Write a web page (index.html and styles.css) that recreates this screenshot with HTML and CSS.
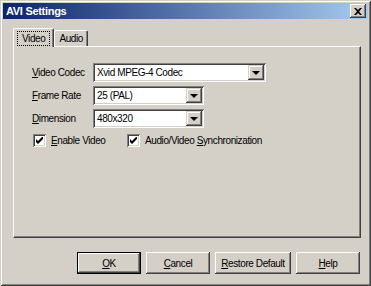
FILE: index.html
```html
<!DOCTYPE html>
<html lang="en">
<head>
  <meta charset="UTF-8">
  <title>AVI Settings</title>
  <link rel="stylesheet" href="styles.css">
</head>
<body>
  <div class="window">
    <div class="titlebar">
      <span class="title">AVI Settings</span>
      <span class="close">
        <svg width="8" height="7" viewBox="0 0 8 7"><path d="M0 0h2l2 2 2-2h2L5 3.5 8 7H6L4 5 2 7H0l3-3.5z" fill="#000"/></svg>
      </span>
    </div>

    <div class="content">
      <div class="tabs">
        <div class="tab active"><span class="focus">Video</span></div>
        <div class="tab">Audio</div>
      </div>

      <div class="panel">
        <div class="row">
          <label class="label"><u>V</u>ideo Codec</label>
          <div class="select wide">
            <span class="value">Xvid MPEG-4 Codec</span>
            <span class="drop"><i class="arrow"></i></span>
          </div>
        </div>
        <div class="row">
          <label class="label"><u>F</u>rame Rate</label>
          <div class="select">
            <span class="value">25 (PAL)</span>
            <span class="drop"><i class="arrow"></i></span>
          </div>
        </div>
        <div class="row">
          <label class="label"><u>D</u>imension</label>
          <div class="select">
            <span class="value">480x320</span>
            <span class="drop"><i class="arrow"></i></span>
          </div>
        </div>
        <div class="checks">
          <div class="check first">
            <span class="box">
              <svg width="7" height="7" viewBox="0 0 7 7"><path d="M0 2v3l2 2 5-5V-1L2 4z" fill="#000"/></svg>
            </span>
            <span><u>E</u>nable Video</span>
          </div>
          <div class="check">
            <span class="box">
              <svg width="7" height="7" viewBox="0 0 7 7"><path d="M0 2v3l2 2 5-5V-1L2 4z" fill="#000"/></svg>
            </span>
            <span>Audio/Video <u>S</u>ynchronization</span>
          </div>
        </div>
      </div>

      <div class="buttons">
        <button class="btn default"><u>O</u>K</button>
        <button class="btn"><u>C</u>ancel</button>
        <button class="btn restore"><u>R</u>estore Default</button>
        <button class="btn"><u>H</u>elp</button>
      </div>
    </div>
  </div>
</body>
</html>
```

FILE: styles.css
```css
body {
  margin: 0;
  padding: 0;
  background: #d4d0c8;
  font-family: "Liberation Sans", Arial, sans-serif;
  font-size: 10px;
  letter-spacing: -0.4px;
  color: #000;
  white-space: nowrap;
}

.window {
  width: 371px;
  height: 286px;
  box-sizing: border-box;
  background: #d4d0c8;
  padding: 3px;
  box-shadow: inset 1px 1px 0 #d4d0c8, inset -1px -1px 0 #404040,
    inset 2px 2px 0 #fff, inset -2px -2px 0 #808080;
  display: flex;
  flex-direction: column;
}

.titlebar {
  height: 16px;
  display: flex;
  align-items: center;
  justify-content: space-between;
  padding: 0 2px 0 2px;
  background: linear-gradient(to right, #0a246a, #a6caf0);
}

.title {
  color: #fff;
  font-weight: bold;
  font-size: 11px;
  letter-spacing: -0.3px;
  padding-left: 1px;
}

.close {
  width: 16px;
  height: 14px;
  box-sizing: border-box;
  background: #d4d0c8;
  display: flex;
  align-items: center;
  justify-content: center;
  box-shadow: inset -1px -1px 0 #404040, inset 1px 1px 0 #fff,
    inset -2px -2px 0 #808080;
}

.content {
  flex: 1;
  padding: 9px 7px 0 10px;
}

.tabs {
  display: flex;
  align-items: flex-end;
  height: 18px;
  position: relative;
  z-index: 1;
}

.tab {
  height: 15px;
  padding: 0 4px;
  display: flex;
  align-items: center;
  border: 1px solid #fff;
  border-right: 1px solid #404040;
  border-bottom: none;
  border-radius: 2px 2px 0 0;
  box-shadow: inset -1px 0 0 #808080;
  background: #d4d0c8;
}

.tab.active {
  height: 18px;
  margin-bottom: -1px;
  padding: 0 4px;
}

.focus {
  outline: 1px dotted #000;
  padding: 0 4px;
  line-height: 13px;
}

.panel {
  height: 192px;
  box-sizing: border-box;
  border: 1px solid #fff;
  border-right-color: #404040;
  border-bottom-color: #404040;
  box-shadow: inset -1px -1px 0 #808080;
  padding: 16px 0 0 18px;
}

.row {
  display: flex;
  align-items: center;
  height: 19px;
  margin-bottom: 4px;
}

.label {
  width: 61px;
}

.select {
  width: 111px;
  height: 19px;
  box-sizing: border-box;
  background: #fff;
  display: flex;
  align-items: center;
  justify-content: space-between;
  padding: 2px;
  box-shadow: inset 1px 1px 0 #808080, inset -1px -1px 0 #fff,
    inset 2px 2px 0 #404040, inset -2px -2px 0 #d4d0c8;
}

.select.wide {
  width: 173px;
}

.value {
  padding-left: 2px;
}

.drop {
  width: 16px;
  height: 15px;
  box-sizing: border-box;
  background: #d4d0c8;
  display: flex;
  align-items: center;
  justify-content: center;
  box-shadow: inset -1px -1px 0 #404040, inset 1px 1px 0 #d4d0c8,
    inset -2px -2px 0 #808080, inset 2px 2px 0 #fff;
}

.arrow {
  width: 0;
  height: 0;
  border-left: 4px solid transparent;
  border-right: 4px solid transparent;
  border-top: 4px solid #000;
}

.checks {
  display: flex;
  align-items: center;
  margin-top: 6px;
  padding-left: 1px;
}

.check {
  display: flex;
  align-items: center;
  gap: 5px;
}

.check.first {
  width: 94px;
}

.box {
  width: 13px;
  height: 13px;
  box-sizing: border-box;
  background: #fff;
  display: flex;
  align-items: center;
  justify-content: center;
  box-shadow: inset 1px 1px 0 #808080, inset -1px -1px 0 #fff,
    inset 2px 2px 0 #404040, inset -2px -2px 0 #d4d0c8;
}

.buttons {
  display: flex;
  justify-content: flex-end;
  gap: 5px;
  margin-top: 14px;
  padding-right: 1px;
}

.btn {
  width: 64px;
  height: 22px;
  font-family: inherit;
  font-size: 10px;
  letter-spacing: -0.4px;
  background: #d4d0c8;
  border: none;
  padding: 0;
  color: #000;
  box-shadow: inset -1px -1px 0 #404040, inset 1px 1px 0 #fff,
    inset -2px -2px 0 #808080;
}

.btn.restore {
  width: 76px;
}

.btn.default {
  box-shadow: inset 0 0 0 1px #000, inset -2px -2px 0 #404040,
    inset 2px 2px 0 #fff, inset -3px -3px 0 #808080;
}
```
